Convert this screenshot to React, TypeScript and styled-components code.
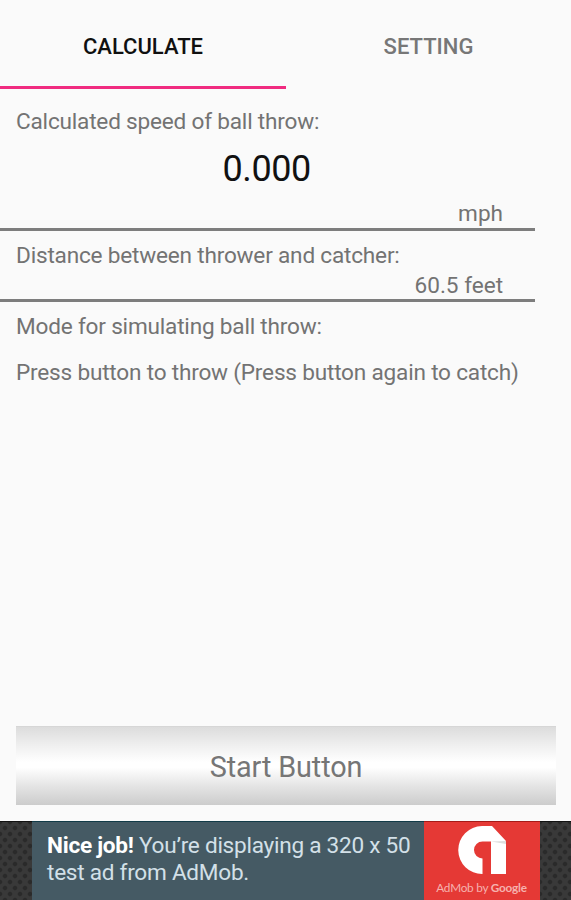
import React from "react";
import styled, { createGlobalStyle } from "styled-components";

const GlobalStyle = createGlobalStyle`
  * { box-sizing: border-box; }
  body { margin: 0; background: #fafafa; }
`;

const Screen = styled.div`
  display: flex;
  flex-direction: column;
  width: 571px;
  height: 900px;
  overflow: hidden;
  background: #fafafa;
  color: #737373;
  font-family: Roboto, "Liberation Sans", sans-serif;
  font-size: 22.6px;
  letter-spacing: -0.2px;
  line-height: 28px;
  white-space: nowrap;
`;

const TabBar = styled.nav`
  display: grid;
  grid-template-columns: 286px 285px;
  height: 89px;
`;

const Tab = styled.div<{ $active?: boolean }>`
  display: flex;
  align-items: center;
  justify-content: center;
  padding-top: ${(p) => (p.$active ? 7 : 4)}px;
  font-size: 22px;
  letter-spacing: 0;
  font-weight: 500;
  color: ${(p) => (p.$active ? "#101010" : "#777")};
  border-bottom: ${(p) => (p.$active ? "3px solid #f02b80" : "0")};
`;

const Section = styled.section<{ $height: number; $ruled?: boolean }>`
  display: flex;
  flex-direction: column;
  width: 534.5px;
  height: ${(p) => p.$height}px;
  padding: ${(p) => (p.$height > 100 ? 19 : 11)}px 0 0 16px;
  border-bottom: ${(p) => (p.$ruled ? "3px solid #7d7d7d" : "0")};
`;

const Label = styled.div``;

const Speed = styled.div`
  height: 56px;
  margin: 5px 0 4px -17px;
  line-height: 56px;
  text-align: center;
  font-size: 36px;
  letter-spacing: -0.4px;
  color: #111;
`;

const Value = styled.div<{ $gap: number }>`
  margin-top: ${(p) => p.$gap}px;
  padding-right: 31.5px;
  text-align: right;
  letter-spacing: -0.02px;
`;

const Mode = styled.div`
  margin-top: 18px;
`;

const StartButton = styled.button`
  width: 540px;
  height: 79px;
  margin: auto 0 16px 16px;
  padding: 2px 0 0;
  border: 0;
  border-top: 1px solid #d6d6d6;
  font: inherit;
  font-size: 28.8px;
  letter-spacing: -0.1px;
  color: #767676;
  background: linear-gradient(#dcdcdc 0%, #eeeeee 22%, #ffffff 45%, #ffffff 52%, #e6e6e6 74%, #cccccc 100%);
`;

const AdBar = styled.aside`
  display: flex;
  justify-content: center;
  flex: none;
  height: 79px;
  border-top: 1px solid #111;
  background-color: #393939;
  background-image: radial-gradient(circle, #2a2a2a 1.6px, transparent 2.8px),
    radial-gradient(circle, #2a2a2a 1.6px, transparent 2.8px);
  background-size: 10px 12px;
  background-position: 0 0, 5px 6px;
`;

const AdCopy = styled.div`
  width: 392px;
  padding: 11px 0 0 15.5px;
  color: #d3e0e8;
  background: #455a64;
  box-shadow: 0 -1px #123b48;
  font-size: 22.6px;
  letter-spacing: -0.26px;
  line-height: 26.5px;
`;

const AdTitle = styled.strong`
  font-weight: 700;
  color: #fff;
`;

const AdBrand = styled.div`
  display: flex;
  flex-direction: column;
  align-items: center;
  width: 116px;
  padding-top: 4px;
  background: #e53935;
  box-shadow: 0 -1px #a51b18;
`;

const BrandLogo = styled.svg`
  display: block;
  width: 48px;
  height: 48px;
`;

const BrandName = styled.div`
  margin-top: 6px;
  font-family: Lato, sans-serif;
  font-size: 11.8px;
  letter-spacing: -0.25px;
  line-height: 16px;
  color: #f6b1ae;
`;

const Google = styled.span`
  font-weight: 700;
  color: #f6b1ae;
`;

export default function App() {
  return (
    <Screen>
      <GlobalStyle />
      <TabBar>
        <Tab $active>CALCULATE</Tab>
        <Tab>SETTING</Tab>
      </TabBar>
      <Section $height={142} $ruled>
        <Label>Calculated speed of ball throw:</Label>
        <Speed>0.000</Speed>
        <Value $gap={-1}>mph</Value>
      </Section>
      <Section $height={71} $ruled>
        <Label>Distance between thrower and catcher:</Label>
        <Value $gap={2}>60.5 feet</Value>
      </Section>
      <Section $height={90}>
        <Label>Mode for simulating ball throw:</Label>
        <Mode>Press button to throw (Press button again to catch)</Mode>
      </Section>
      <StartButton>Start Button</StartButton>
      <AdBar>
        <AdCopy>
          <AdTitle>Nice job!</AdTitle> You’re displaying a 320 x 50
          <br />
          test ad from AdMob.
        </AdCopy>
        <AdBrand>
          <BrandLogo viewBox="0 0 48 48">
            <path fill="#fff" d="M24 0H34L48 15V48H33V15.5H24.5A8.5 8.5 0 0 0 24.5 32.5V48A24 24 0 0 1 24 0Z" />
            <path fill="#dedede" d="M33 15.5L48 15V18Z" />
          </BrandLogo>
          <BrandName>AdMob by <Google>Google</Google></BrandName>
        </AdBrand>
      </AdBar>
    </Screen>
  );
}
